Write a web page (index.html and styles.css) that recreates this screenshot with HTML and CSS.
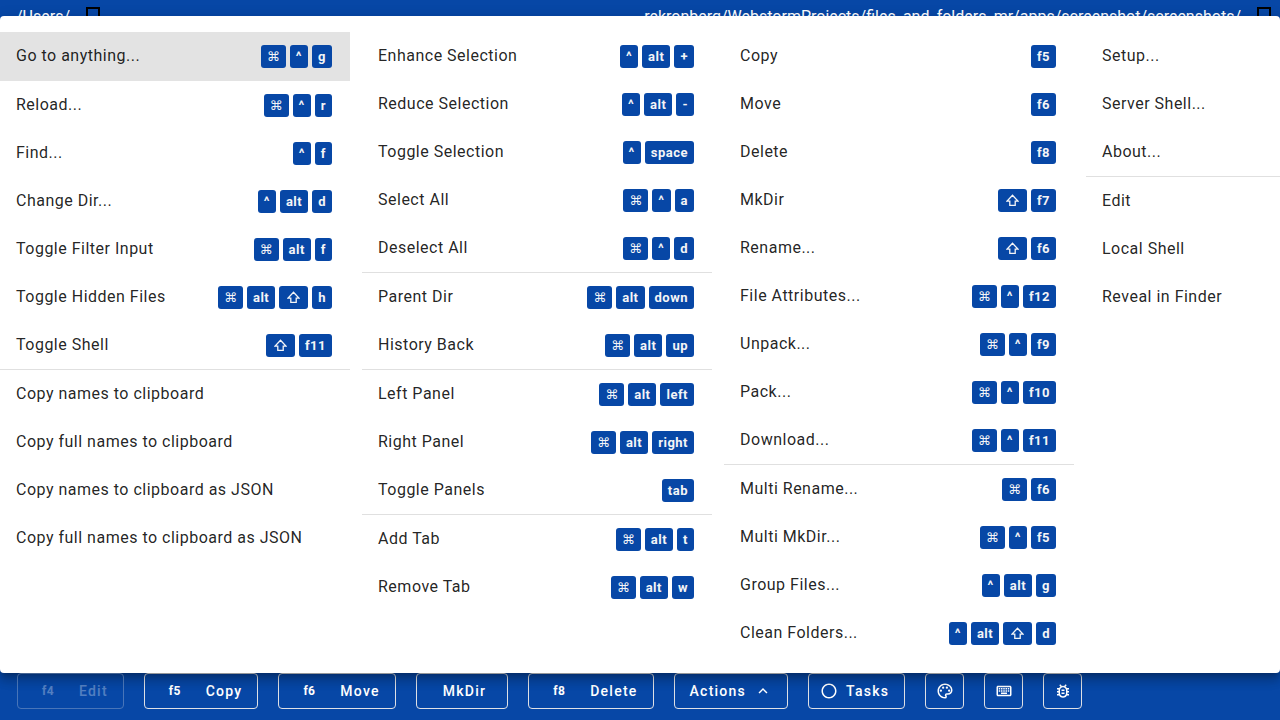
FILE: index.html
```html
<!DOCTYPE html>
<html lang="en">
<head>
<meta charset="utf-8">
<title>Files and Folders</title>
<link rel="stylesheet" href="styles.css">
</head>
<body>
<svg width="0" height="0" class="defs" aria-hidden="true">
  <symbol id="shift" viewBox="0 0 12 12"><path d="M6 1.200L11 6.500H8.500V10.500H3.500V6.500H1Z" fill="none" stroke="currentColor" stroke-width="1.200"/></symbol>
</svg>
<header class="paths">
  <div class="path"><span class="path-text">/Users/</span><i class="tofu"></i></div>
  <div class="path path-end"><span class="path-text">/Users/marekronberg/WebstormProjects/files_and_folders_mr/apps/screenshot/screenshots/</span><i class="tofu"></i></div>
</header>

<main class="menu">
  <div class="column">
    <button class="item active">Go to anything...<span class="keys"><kbd class="cmd">⌘</kbd><kbd>^</kbd><kbd>g</kbd></span></button>
    <hr class="shade">
    <button class="item">Reload...<span class="keys"><kbd class="cmd">⌘</kbd><kbd>^</kbd><kbd>r</kbd></span></button>
    <button class="item">Find...<span class="keys"><kbd>^</kbd><kbd>f</kbd></span></button>
    <button class="item">Change Dir...<span class="keys"><kbd>^</kbd><kbd>alt</kbd><kbd>d</kbd></span></button>
    <button class="item">Toggle Filter Input<span class="keys"><kbd class="cmd">⌘</kbd><kbd>alt</kbd><kbd>f</kbd></span></button>
    <button class="item">Toggle Hidden Files<span class="keys"><kbd class="cmd">⌘</kbd><kbd>alt</kbd><kbd class="shift" aria-label="shift"><svg><use href="#shift"/></svg></kbd><kbd>h</kbd></span></button>
    <button class="item">Toggle Shell<span class="keys"><kbd class="shift" aria-label="shift"><svg><use href="#shift"/></svg></kbd><kbd>f11</kbd></span></button>
    <hr>
    <button class="item">Copy names to clipboard</button>
    <button class="item">Copy full names to clipboard</button>
    <button class="item">Copy names to clipboard as JSON</button>
    <button class="item">Copy full names to clipboard as JSON</button>
  </div>
  <div class="column">
    <button class="item">Enhance Selection<span class="keys"><kbd>^</kbd><kbd>alt</kbd><kbd>+</kbd></span></button>
    <button class="item">Reduce Selection<span class="keys"><kbd>^</kbd><kbd>alt</kbd><kbd>-</kbd></span></button>
    <button class="item">Toggle Selection<span class="keys"><kbd>^</kbd><kbd>space</kbd></span></button>
    <button class="item">Select All<span class="keys"><kbd class="cmd">⌘</kbd><kbd>^</kbd><kbd>a</kbd></span></button>
    <button class="item">Deselect All<span class="keys"><kbd class="cmd">⌘</kbd><kbd>^</kbd><kbd>d</kbd></span></button>
    <hr>
    <button class="item">Parent Dir<span class="keys"><kbd class="cmd">⌘</kbd><kbd>alt</kbd><kbd>down</kbd></span></button>
    <button class="item">History Back<span class="keys"><kbd class="cmd">⌘</kbd><kbd>alt</kbd><kbd>up</kbd></span></button>
    <hr>
    <button class="item">Left Panel<span class="keys"><kbd class="cmd">⌘</kbd><kbd>alt</kbd><kbd>left</kbd></span></button>
    <button class="item">Right Panel<span class="keys"><kbd class="cmd">⌘</kbd><kbd>alt</kbd><kbd>right</kbd></span></button>
    <button class="item">Toggle Panels<span class="keys"><kbd>tab</kbd></span></button>
    <hr>
    <button class="item">Add Tab<span class="keys"><kbd class="cmd">⌘</kbd><kbd>alt</kbd><kbd>t</kbd></span></button>
    <button class="item">Remove Tab<span class="keys"><kbd class="cmd">⌘</kbd><kbd>alt</kbd><kbd>w</kbd></span></button>
  </div>
  <div class="column">
    <button class="item">Copy<span class="keys"><kbd>f5</kbd></span></button>
    <button class="item">Move<span class="keys"><kbd>f6</kbd></span></button>
    <button class="item">Delete<span class="keys"><kbd>f8</kbd></span></button>
    <button class="item">MkDir<span class="keys"><kbd class="shift" aria-label="shift"><svg><use href="#shift"/></svg></kbd><kbd>f7</kbd></span></button>
    <button class="item">Rename...<span class="keys"><kbd class="shift" aria-label="shift"><svg><use href="#shift"/></svg></kbd><kbd>f6</kbd></span></button>
    <button class="item">File Attributes...<span class="keys"><kbd class="cmd">⌘</kbd><kbd>^</kbd><kbd>f12</kbd></span></button>
    <button class="item">Unpack...<span class="keys"><kbd class="cmd">⌘</kbd><kbd>^</kbd><kbd>f9</kbd></span></button>
    <button class="item">Pack...<span class="keys"><kbd class="cmd">⌘</kbd><kbd>^</kbd><kbd>f10</kbd></span></button>
    <button class="item">Download...<span class="keys"><kbd class="cmd">⌘</kbd><kbd>^</kbd><kbd>f11</kbd></span></button>
    <hr>
    <button class="item">Multi Rename...<span class="keys"><kbd class="cmd">⌘</kbd><kbd>f6</kbd></span></button>
    <button class="item">Multi MkDir...<span class="keys"><kbd class="cmd">⌘</kbd><kbd>^</kbd><kbd>f5</kbd></span></button>
    <button class="item">Group Files...<span class="keys"><kbd>^</kbd><kbd>alt</kbd><kbd>g</kbd></span></button>
    <button class="item">Clean Folders...<span class="keys"><kbd>^</kbd><kbd>alt</kbd><kbd class="shift" aria-label="shift"><svg><use href="#shift"/></svg></kbd><kbd>d</kbd></span></button>
  </div>
  <div class="column">
    <button class="item">Setup...</button>
    <button class="item">Server Shell...</button>
    <button class="item">About...</button>
    <hr>
    <button class="item">Edit</button>
    <button class="item">Local Shell</button>
    <button class="item">Reveal in Finder</button>
  </div>
</main>

<footer class="toolbar">
  <button class="action" disabled><span class="hint">f4</span>Edit</button>
  <button class="action"><span class="hint">f5</span>Copy</button>
  <button class="action"><span class="hint">f6</span>Move</button>
  <button class="action wide">MkDir</button>
  <button class="action"><span class="hint">f8</span>Delete</button>
  <button class="action">Actions<svg class="icon trailing" viewBox="0 0 24 24"><path d="M12 8l-6 6 1.410 1.410L12 10.830l4.590 4.580L18 14z"/></svg></button>
  <button class="action leading"><svg class="icon" viewBox="0 0 24 24"><path d="M12 2C6.480 2 2 6.480 2 12s4.480 10 10 10 10-4.480 10-10S17.520 2 12 2zm0 18c-4.420 0-8-3.580-8-8s3.580-8 8-8 8 3.580 8 8-3.580 8-8 8z"/></svg>Tasks</button>
  <button class="action square" aria-label="Palette"><svg class="icon" viewBox="0 0 24 24"><path d="M12 22C6.490 22 2 17.510 2 12S6.490 2 12 2s10 4.040 10 9c0 3.310-2.690 6-6 6h-1.770c-.28 0-.5.220-.5.500 0 .120.050.230.130.330.410.470.640 1.060.640 1.670A2.500 2.500 0 0112 22zm0-18c-4.410 0-8 3.590-8 8s3.590 8 8 8c.280 0 .5-.220.5-.5a.54.54 0 00-.14-.35c-.41-.46-.63-1.050-.63-1.650a2.500 2.500 0 012.500-2.500H16c2.210 0 4-1.790 4-4 0-3.860-3.590-7-8-7z"/><circle cx="6.500" cy="11.500" r="1.500"/><circle cx="9.500" cy="7.500" r="1.500"/><circle cx="14.500" cy="7.500" r="1.500"/><circle cx="17.500" cy="11.500" r="1.500"/></svg></button>
  <button class="action square" aria-label="Keyboard"><svg class="icon" viewBox="0 0 24 24"><path d="M20 7v10H4V7h16m0-2H4c-1.100 0-1.990.900-1.990 2L2 17c0 1.100.900 2 2 2h16c1.100 0 2-.9 2-2V7c0-1.100-.9-2-2-2zm-9 3h2v2h-2V8zm0 3h2v2h-2v-2zM8 8h2v2H8V8zm0 3h2v2H8v-2zm-3 0h2v2H5v-2zm0-3h2v2H5V8zm3 6h8v2H8v-2zm6-3h2v2h-2v-2zm0-3h2v2h-2V8zm3 3h2v2h-2v-2zm0-3h2v2h-2V8z"/></svg></button>
  <button class="action square" aria-label="Report a bug"><svg class="icon" viewBox="0 0 24 24"><path d="M20 8h-2.810a5.985 5.985 0 00-1.820-1.960L17 4.410 15.590 3l-2.170 2.170a6.002 6.002 0 00-2.830 0L8.410 3 7 4.410l1.620 1.630C7.880 6.550 7.260 7.220 6.810 8H4v2h2.090c-.05.330-.09.660-.09 1v1H4v2h2v1c0 .340.040.670.090 1H4v2h2.810c1.040 1.790 2.970 3 5.190 3s4.150-1.210 5.190-3H20v-2h-2.090c.050-.33.090-.66.090-1v-1h2v-2h-2v-1c0-.34-.04-.67-.09-1H20V8zm-4 7c0 2.210-1.790 4-4 4s-4-1.790-4-4v-4c0-2.210 1.790-4 4-4s4 1.790 4 4v4zm-6-1h4v2h-4zm0-4h4v2h-4z"/></svg></button>
</footer>
</body>
</html>
```

FILE: styles.css
```css
* { box-sizing: border-box; }

body {
  margin: 0;
  height: 100vh;
  display: flex;
  flex-direction: column;
  justify-content: space-between;
  overflow: hidden;
  background: #0747a6;
  color: #fff;
  font-family: Roboto, "DejaVu Sans", sans-serif;
}

button { font: inherit; cursor: pointer; }
.defs { position: absolute; }

.paths { display: grid; grid-template-columns: 1fr 1fr; }
.path {
  display: flex;
  gap: 16px;
  min-width: 0;
  padding: 7px 9px 0 16px;
  font-size: 16px;
  line-height: 20px;
}
.path-end { padding-left: 4px; }
.path-end .path-text { flex: 1; }
.path-text {
  display: flex;
  justify-content: flex-end;
  overflow: hidden;
  white-space: nowrap;
}
.tofu { flex: none; width: 14px; height: 18px; border: 2px solid #000; }

.menu {
  position: absolute;
  top: 16px;
  left: 0;
  right: 0;
  display: flex;
  gap: 12px;
  padding: 16px 0;
  overflow: hidden;
  border-radius: 4px;
  background: #fff;
  color: rgba(0, 0, 0, 0.87);
  box-shadow: 0 5px 5px -3px rgba(0, 0, 0, 0.2), 0 8px 10px 1px rgba(0, 0, 0, 0.14), 0 3px 14px 2px rgba(0, 0, 0, 0.12);
}
.column { flex: none; width: 350px; }
.item {
  display: flex;
  align-items: center;
  justify-content: space-between;
  width: 100%;
  height: 48px;
  padding: 0 18px 0 16px;
  border: 0;
  background: none;
  color: inherit;
  font-size: 16px;
  line-height: 24px;
  letter-spacing: 0.03125em;
  text-align: left;
}
.active { background: #e3e3e3; }
hr { height: 1px; margin: 0; border: 0; background: #e0e0e0; }
hr.shade { background: #e3e3e3; }

.keys { display: flex; gap: 4px; }
kbd {
  height: 23px;
  padding: 0 6px;
  border-radius: 3px;
  background: #0747a6;
  color: #f4f5f7;
  font-family: inherit;
  font-size: 13px;
  font-weight: 700;
  line-height: 24px;
}
.cmd { width: 25px; font-weight: 400; text-align: center; }
.shift { display: flex; align-items: center; padding: 0 8px; }
.shift svg { width: 13px; height: 13px; }

.toolbar { display: flex; gap: 20px; padding: 0 17px 11px; }
.action {
  display: flex;
  align-items: center;
  height: 36px;
  padding: 0 15px;
  border: 1px solid #dfe1e6;
  border-radius: 4px;
  background: none;
  color: #fff;
  font-size: 14px;
  font-weight: 500;
  letter-spacing: 0.0892857em;
}
.action:disabled { opacity: 0.3; }
.hint { margin: 0 25px 0 9px; font-size: 12px; font-weight: 700; letter-spacing: 0.03em; }
.wide { padding: 0 21px 0 26px; }
.leading { padding-left: 11px; }
.icon { width: 18px; height: 18px; margin-right: 8px; fill: currentColor; }
.trailing { margin: 0 0 0 8px; }
.square { justify-content: center; width: 39px; padding: 0; }
.square .icon { margin: 0; }
```
